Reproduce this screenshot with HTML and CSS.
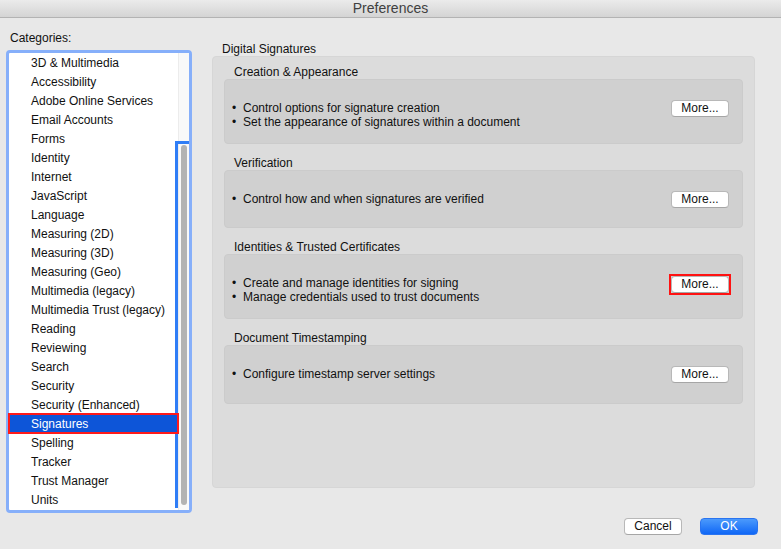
FILE: index.html
```html
<!DOCTYPE html>
<html>
<head>
<meta charset="utf-8">
<title>Preferences</title>
<link rel="stylesheet" href="styles.css">
</head>
<body>
<div class="window">
  <div class="titlebar">Preferences</div>
  <div class="main">
    <div class="left">
      <div class="label">Categories:</div>
      <div class="listbox">
        <ul class="items">
          <li>3D &amp; Multimedia</li>
          <li>Accessibility</li>
          <li>Adobe Online Services</li>
          <li>Email Accounts</li>
          <li>Forms</li>
          <li>Identity</li>
          <li>Internet</li>
          <li>JavaScript</li>
          <li>Language</li>
          <li>Measuring (2D)</li>
          <li>Measuring (3D)</li>
          <li>Measuring (Geo)</li>
          <li>Multimedia (legacy)</li>
          <li>Multimedia Trust (legacy)</li>
          <li>Reading</li>
          <li>Reviewing</li>
          <li>Search</li>
          <li>Security</li>
          <li>Security (Enhanced)</li>
          <li class="selected">Signatures</li>
          <li>Spelling</li>
          <li>Tracker</li>
          <li>Trust Manager</li>
          <li>Units</li>
        </ul>
        <div class="track"><div class="thumb"></div></div>
        <div class="scroll-mark"></div>
      </div>
    </div>
    <div class="right">
      <div class="group-title">Digital Signatures</div>
      <div class="panel">
        <div class="section">
          <div class="sec-title">Creation &amp; Appearance</div>
          <div class="box h1">
            <div class="lines">
              <div><span class="dot">•</span>Control options for signature creation</div>
              <div><span class="dot">•</span>Set the appearance of signatures within a document</div>
            </div>
            <button class="btn">More...</button>
          </div>
        </div>
        <div class="section">
          <div class="sec-title">Verification</div>
          <div class="box h2">
            <div class="lines">
              <div><span class="dot">•</span>Control how and when signatures are verified</div>
            </div>
            <button class="btn">More...</button>
          </div>
        </div>
        <div class="section">
          <div class="sec-title">Identities &amp; Trusted Certificates</div>
          <div class="box h3">
            <div class="lines">
              <div><span class="dot">•</span>Create and manage identities for signing</div>
              <div><span class="dot">•</span>Manage credentials used to trust documents</div>
            </div>
            <span class="marker"><button class="btn">More...</button></span>
          </div>
        </div>
        <div class="section">
          <div class="sec-title">Document Timestamping</div>
          <div class="box h4">
            <div class="lines">
              <div><span class="dot">•</span>Configure timestamp server settings</div>
            </div>
            <button class="btn">More...</button>
          </div>
        </div>
      </div>
    </div>
  </div>
  <div class="footer">
    <button class="btn wide">Cancel</button>
    <button class="btn wide primary">OK</button>
  </div>
</div>
</body>
</html>
```
FILE: styles.css
```css
* { box-sizing: border-box; }
html, body { margin: 0; padding: 0; }
body {
  width: 781px;
  height: 549px;
  overflow: hidden;
  background: #e8e8e8;
  font-family: "Liberation Sans", Arial, sans-serif;
  font-size: 12px;
  color: #111;
}
.window { display: flex; flex-direction: column; height: 549px; }
.titlebar {
  height: 18px;
  line-height: 16px;
  text-align: center;
  font-size: 14px;
  color: #404040;
  background: linear-gradient(#ebebeb, #d4d4d4);
  border-bottom: 1px solid #b3b3b3;
}
.main { display: flex; }
.left {
  width: 186px;
  margin-left: 6px;
  padding-top: 12px;
  display: flex;
  flex-direction: column;
}
.label { line-height: 12px; padding: 2px 0 0 4px; margin-bottom: 6px; }
.listbox {
  position: relative;
  display: flex;
  width: 186px;
  height: 463px;
  border: 3px solid #86affa;
  border-radius: 4px;
  background: #fff;
}
.items { list-style: none; margin: 0; padding: 0; width: 169px; }
.items li { height: 19px; line-height: 18px; padding: 1px 0 0 22px; white-space: nowrap; }
.items li.selected {
  position: relative;
  z-index: 2;
  background: #0d55d8;
  color: #fff;
  outline: 2px solid #ff1a1a;
  outline-offset: -1px;
}
.track {
  width: 11px;
  background: #f9f9f9;
  border-left: 1px solid #ececec;
  padding-left: 2px;
}
.thumb {
  margin-top: 92px;
  width: 6px;
  height: 360px;
  border-radius: 3px;
  background: #b3b3b3;
}
.scroll-mark {
  position: absolute;
  z-index: 1;
  left: 166px;
  top: 88px;
  width: 14px;
  height: 367px;
  border-left: 3px solid #2f7df6;
  border-top: 3px solid #2f7df6;
}
.right {
  margin-left: 20px;
  padding-top: 23px;
  display: flex;
  flex-direction: column;
}
.group-title { line-height: 12px; padding: 2px 0 0 10px; margin-bottom: 1px; }
.panel {
  width: 543px;
  height: 432px;
  background: #dcdcdc;
  border: 1px solid #d6d6d6;
  border-radius: 4px;
  padding: 7px 11px 0;
  display: flex;
  flex-direction: column;
  gap: 11px;
}
.sec-title { line-height: 13px; padding: 2px 0 0 10px; }
.box {
  display: flex;
  justify-content: space-between;
  align-items: flex-start;
  background: #d0d0d0;
  border: 1px solid #cbcbcb;
  border-radius: 4px;
  padding: 20px 13px 0 7px;
}
.h1 { height: 65px; }
.h2 { height: 58px; }
.h3 { height: 65px; }
.h4 { height: 59px; }
.lines { line-height: 14px; padding-top: 1px; }
.dot { display: inline-block; width: 11px; }
.btn {
  font-family: inherit;
  font-size: 12px;
  color: #111;
  width: 58px;
  height: 17px;
  padding: 0;
  line-height: 15px;
  background: #fff;
  border: 1px solid #b8b8b8;
  border-bottom-color: #a6a6a6;
  border-radius: 4px;
}
.marker {
  display: block;
  line-height: 0;
  border: 2px solid #ff1212;
  margin: -1px -2px 0 0;
}
.marker .btn { display: block; }
.footer {
  display: flex;
  justify-content: flex-end;
  gap: 18px;
  padding: 5px 23px 0 0;
}
.btn.primary {
  background: linear-gradient(#4b9afc, #1067f6);
  border-color: #2a74f0;
  color: #fff;
}
```
